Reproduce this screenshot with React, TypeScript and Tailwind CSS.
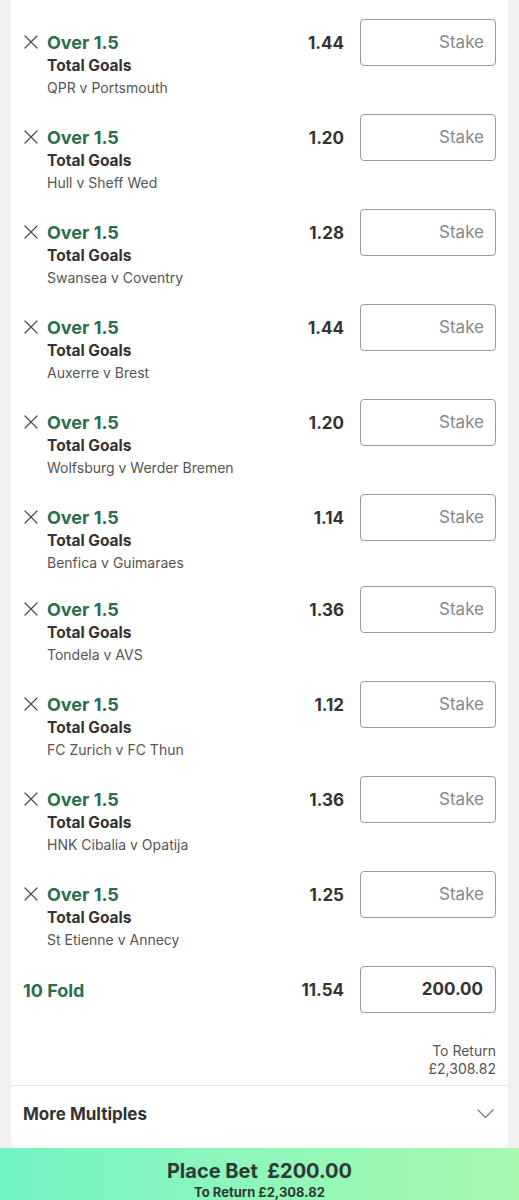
import React from "react";

const bets = [
  { odds: "1.44", match: "QPR v Portsmouth", h: 95 },
  { odds: "1.20", match: "Hull v Sheff Wed", h: 95 },
  { odds: "1.28", match: "Swansea v Coventry", h: 95 },
  { odds: "1.44", match: "Auxerre v Brest", h: 95 },
  { odds: "1.20", match: "Wolfsburg v Werder Bremen", h: 95 },
  { odds: "1.14", match: "Benfica v Guimaraes", h: 92 },
  { odds: "1.36", match: "Tondela v AVS", h: 95 },
  { odds: "1.12", match: "FC Zurich v FC Thun", h: 95 },
  { odds: "1.36", match: "HNK Cibalia v Opatija", h: 95 },
  { odds: "1.25", match: "St Etienne v Annecy", h: 95 },
];

function XIcon() {
  return (
    <svg width="14" height="14" viewBox="0 0 14 14" className="shrink-0">
      <path d="M1 1 L13 13 M13 1 L1 13" stroke="#4a4a4a" strokeWidth="1.2" strokeLinecap="round" />
    </svg>
  );
}

function Row({ odds, match, h }: { odds: string; match: string; h: number }) {
  return (
    <div className="flex items-start" style={{ height: h }}>
      <div className="flex flex-1 items-start pl-[13px] pt-[35px]">
        <XIcon />
        <div className="ml-[9px] -mt-[4px] flex flex-col">
          <div className="text-[18px] leading-[24px] font-bold text-[#2b6e50]">Over 1.5</div>
          <div className="text-[15.5px] leading-[22px] font-bold text-[#333]">Total Goals</div>
          <div className="text-[14px] leading-[21px] text-[#555]">{match}</div>
        </div>
      </div>
      <div className="mt-[19px] flex h-[47px] items-center">
        <div className="mt-[2px] text-[17px] font-bold text-[#333]">{odds}</div>
        <div className="ml-[16px] flex h-[47px] w-[136px] items-center justify-end rounded-[4px] border border-[#9a9a9a] pr-[11px] pt-[1px] text-[17px] text-[#888]">
          Stake
        </div>
      </div>
    </div>
  );
}

export default function App() {
  return (
    <div
      className="flex h-[1200px] w-[519px] flex-col bg-[#f1f1f1]"
      style={{ fontFamily: "Inter, 'Open Sans', sans-serif" }}
    >
      <div className="mx-[11px] flex flex-1 flex-col rounded-b-[8px] bg-white pr-[12px]">
        {bets.map((b, i) => (
          <Row key={i} {...b} />
        ))}
        <div className="flex items-start">
          <div className="mt-[19px] flex h-[47px] flex-1 items-center pl-[12px] pt-[2px] text-[18px] font-bold text-[#2b6e50]">
            10 Fold
          </div>
          <div className="mt-[19px] flex h-[47px] items-center">
            <div className="mt-[2px] text-[17px] font-bold text-[#333]">11.54</div>
            <div className="ml-[16px] flex h-[47px] w-[136px] items-center justify-end rounded-[4px] border border-[#9a9a9a] pr-[12px] pt-[1px] text-[17px] font-bold text-[#333]">
              200.00
            </div>
          </div>
        </div>
        <div className="mt-[29px] flex flex-col items-end text-[14px] leading-[18px] text-[#555]">
          <div>To Return</div>
          <div>£2,308.82</div>
        </div>
        <div className="-mr-[12px] mt-[7px] border-t border-[#e6e6e6]" />
        <div className="flex items-center justify-between pl-[12px] pt-[16px]">
          <div className="text-[17px] leading-[24px] font-bold text-[#333]">More Multiples</div>
          <svg width="17" height="10" viewBox="0 0 17 10" className="mr-[2px]">
            <path d="M1 1 L8.5 8.5 L16 1" stroke="#777" strokeWidth="1.2" fill="none" strokeLinecap="round" strokeLinejoin="round" />
          </svg>
        </div>
      </div>
      <div className="flex h-[52px] shrink-0 flex-col items-center bg-gradient-to-r from-[#72f4c4] to-[#a8f8ae] pt-[11px]">
        <div className="text-[20px] leading-[24px] font-bold text-[#2d3a34]">
          Place Bet&nbsp;&nbsp;£200.00
        </div>
        <div className="mt-[1px] text-[13px] leading-[16px] font-bold text-[#2d3a34]">To Return £2,308.82</div>
      </div>
    </div>
  );
}
